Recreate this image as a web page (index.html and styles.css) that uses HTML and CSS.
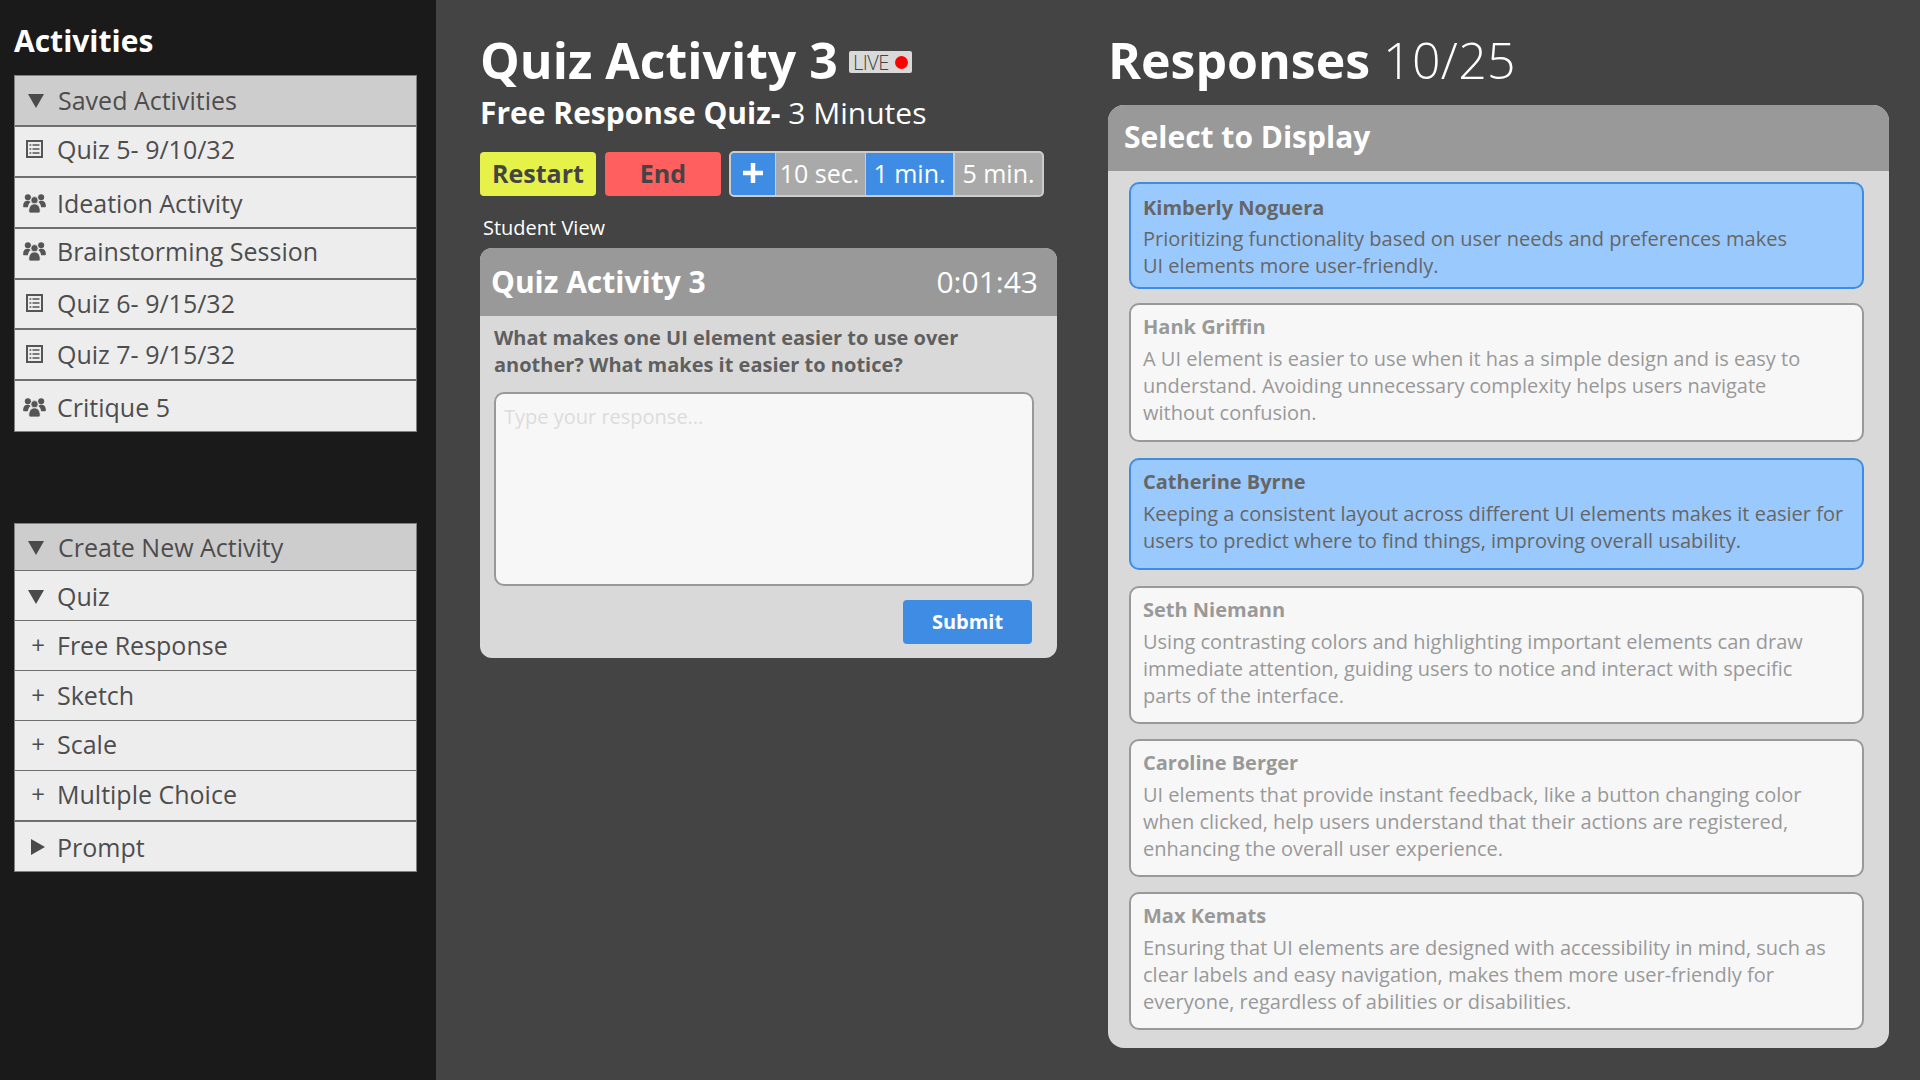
FILE: index.html
```html
<!DOCTYPE html>
<html lang="en">
<head>
  <meta charset="UTF-8">
  <title>Quiz Activity 3</title>
  <link rel="stylesheet" href="styles.css">
</head>
<body>

  <svg class="defs" width="0" height="0">
    <symbol id="ic-quiz" viewBox="0 0 17 18">
      <rect x="1" y="1" width="15" height="16" fill="none" stroke="#555" stroke-width="2"/>
      <path d="M3.500 5h1.800M6.500 5h7M3.500 9h1.800M6.500 9h7M3.500 13h1.800M6.500 13h7" stroke="#555" stroke-width="1.500"/>
    </symbol>
    <symbol id="ic-people" viewBox="0 0 24 20">
      <circle cx="5" cy="3.500" r="3.200"/>
      <circle cx="19" cy="3.500" r="3.200"/>
      <path d="M0 12.500c0-3.500 2-5.500 4.500-5.500 1.500 0 2.500.5 3.500 1.500-1.800 1.500-2.700 3.200-3 5.500H1c-.6 0-1-.9-1-1.500z"/>
      <path d="M24 12.500c0-3.500-2-5.500-4.500-5.500-1.500 0-2.500.5-3.500 1.500 1.800 1.500 2.700 3.200 3 5.500h4c.6 0 1-.9 1-1.500z"/>
      <circle cx="12" cy="6.500" r="3.800" stroke="#ededed" stroke-width=".8"/>
      <path d="M6 18c0-4.800 2.500-7.500 6-7.500s6 2.700 6 7.500c0 1.200-.8 2-2 2H8c-1.200 0-2-.8-2-2z" stroke="#ededed" stroke-width=".8"/>
    </symbol>
  </svg>

  <div class="app">

    <aside class="sidebar">
      <h2 class="side-title">Activities</h2>

      <div class="side-list saved-list">
        <div class="side-row side-head"><span class="slot"><span class="tri-down"></span></span><span class="side-label">Saved Activities</span></div>
        <div class="side-row up"><span class="slot"><svg class="ic-q"><use href="#ic-quiz"/></svg></span><span>Quiz 5- 9/10/32</span></div>
        <div class="side-row nudge-down"><span class="slot"><svg class="ic-p"><use href="#ic-people"/></svg></span><span>Ideation Activity</span></div>
        <div class="side-row up"><span class="slot"><svg class="ic-p"><use href="#ic-people"/></svg></span><span>Brainstorming Session</span></div>
        <div class="side-row nudge-up"><span class="slot"><svg class="ic-q"><use href="#ic-quiz"/></svg></span><span>Quiz 6- 9/15/32</span></div>
        <div class="side-row nudge-up"><span class="slot"><svg class="ic-q"><use href="#ic-quiz"/></svg></span><span>Quiz 7- 9/15/32</span></div>
        <div class="side-row nudge-down"><span class="slot"><svg class="ic-p"><use href="#ic-people"/></svg></span><span>Critique 5</span></div>
      </div>

      <div class="side-list create-list">
        <div class="side-row side-head"><span class="slot"><span class="tri-down"></span></span><span class="side-label">Create New Activity</span></div>
        <div class="side-row"><span class="slot"><span class="tri-down"></span></span><span>Quiz</span></div>
        <div class="side-row nudge-up"><span class="slot"><span class="plus">+</span></span><span>Free Response</span></div>
        <div class="side-row nudge-up"><span class="slot"><span class="plus">+</span></span><span>Sketch</span></div>
        <div class="side-row up"><span class="slot"><span class="plus">+</span></span><span>Scale</span></div>
        <div class="side-row up"><span class="slot"><span class="plus">+</span></span><span>Multiple Choice</span></div>
        <div class="side-row sep"><span class="slot"><span class="tri-right"></span></span><span>Prompt</span></div>
      </div>
    </aside>

    <main class="main">

      <section class="activity">
        <div class="title-line">
          <h1>Quiz Activity 3</h1>
          <div class="live">LIVE<span class="live-dot"></span></div>
        </div>
        <p class="subtitle"><strong>Free Response Quiz-</strong> 3 Minutes</p>

        <div class="controls">
          <button class="btn btn-restart">Restart</button>
          <button class="btn btn-end">End</button>
          <div class="timer">
            <span class="seg seg-plus">
              <svg width="20" height="20" viewBox="0 0 20 20"><path d="M10 0v20M0 10h20" stroke="#fff" stroke-width="4.500"/></svg>
            </span>
            <span class="seg seg-10">10 sec.</span>
            <span class="seg seg-1 on">1 min.</span>
            <span class="seg seg-5">5 min.</span>
          </div>
        </div>

        <div class="view-label">Student View</div>

        <div class="student-card">
          <div class="student-head">
            <span class="student-title">Quiz Activity 3</span>
            <span class="student-time">0:01:43</span>
          </div>
          <div class="student-body">
            <p class="question">What makes one UI element easier to use over another? What makes it easier to notice?</p>
            <div class="answer">Type your response...</div>
            <div class="submit-line"><button class="btn-submit">Submit</button></div>
          </div>
        </div>
      </section>

      <section class="responses">
        <h1>Responses <span class="count">10/25</span></h1>

        <div class="resp-panel">
          <div class="resp-head">Select to Display</div>
          <div class="resp-list">
            <div class="resp selected r-short">
              <div class="resp-name">Kimberly Noguera</div>
              <p>Prioritizing functionality based on user needs and preferences makes<br>UI elements more user-friendly.</p>
            </div>
            <div class="resp r-tall">
              <div class="resp-name">Hank Griffin</div>
              <p>A UI element is easier to use when it has a simple design and is easy to<br>understand. Avoiding unnecessary complexity helps users navigate<br>without confusion.</p>
            </div>
            <div class="resp selected r-mid">
              <div class="resp-name">Catherine Byrne</div>
              <p>Keeping a consistent layout across different UI elements makes it easier for<br>users to predict where to find things, improving overall usability.</p>
            </div>
            <div class="resp">
              <div class="resp-name">Seth Niemann</div>
              <p>Using contrasting colors and highlighting important elements can draw<br>immediate attention, guiding users to notice and interact with specific<br>parts of the interface.</p>
            </div>
            <div class="resp">
              <div class="resp-name">Caroline Berger</div>
              <p>UI elements that provide instant feedback, like a button changing color<br>when clicked, help users understand that their actions are registered,<br>enhancing the overall user experience.</p>
            </div>
            <div class="resp">
              <div class="resp-name">Max Kemats</div>
              <p>Ensuring that UI elements are designed with accessibility in mind, such as<br>clear labels and easy navigation, makes them more user-friendly for<br>everyone, regardless of abilities or disabilities.</p>
            </div>
          </div>
        </div>
      </section>

    </main>
  </div>

</body>
</html>
```

FILE: styles.css
```css
* {
  box-sizing: border-box;
}

html, body {
  margin: 0;
  height: 100%;
}

body {
  background-color: #444;
  color: #fff;
  font-family: "Open Sans", sans-serif;
  overflow: hidden;
}

.defs {
  position: absolute;
}

.app {
  display: flex;
  height: 1080px;
}

/* sidebar */
.sidebar {
  width: 436px;
  flex: none;
  background: #1a1a1a;
  padding: 22px 0 0 14px;
}

.side-title {
  margin: 0 0 15px;
  font-size: 30px;
  line-height: 38px;
  font-weight: 700;
}

.side-list {
  width: 403px;
  border: 1px solid #808080;
  background: #ededed;
  color: #4d4d4d;
}

.create-list {
  margin-top: 91px;
}

.side-row {
  display: flex;
  align-items: center;
  height: 50.9px;
  border-bottom: 2px solid #6f6f6f;
  font-size: 25px;
}

.saved-list .side-row:last-child {
  border-bottom: none;
  height: 50px;
}

.create-list .side-row {
  height: 50px;
  border-bottom-width: 1px;
}

.create-list .side-head {
  height: 47px;
}

.create-list .side-row.sep {
  border-top: 1px solid #6f6f6f;
  border-bottom: none;
  height: 50px;
}

.side-row.up {
  padding-bottom: 4px;
}

.side-row.nudge-up {
  padding-bottom: 2px;
}

.side-row.nudge-down {
  padding-top: 2px;
}

.side-head {
  background: #cdcdcd;
}

.side-label {
  margin-left: 1px;
}

.slot {
  display: flex;
  align-items: center;
  justify-content: center;
  flex: none;
  width: 42px;
}

.tri-down {
  margin-top: 2px;
  border-left: 8px solid transparent;
  border-right: 8px solid transparent;
  border-top: 14px solid #4a4a4a;
}

.tri-right {
  margin-left: 4px;
  border-top: 8px solid transparent;
  border-bottom: 8px solid transparent;
  border-left: 14px solid #4a4a4a;
}

.plus {
  margin-left: 4px;
  font-size: 24px;
  line-height: 30px;
}

.ic-q {
  width: 17px;
  height: 18px;
  margin-right: 3px;
}

.ic-p {
  width: 23px;
  height: 19px;
  margin-right: 3px;
  fill: #555;
}

/* middle column */
.main {
  flex: 1;
  display: flex;
}

.activity {
  width: 670px;
  flex: none;
  padding: 28px 0 0 44px;
}

h1 {
  margin: 0;
  font-size: 50px;
  line-height: 65px;
  font-weight: 700;
}

.title-line {
  display: flex;
  align-items: flex-start;
}

.live {
  display: flex;
  align-items: center;
  height: 22px;
  margin: 23px 0 0 11px;
  padding: 0 4px;
  background: #d9d9d9;
  border-radius: 2px;
  color: #444;
  font-size: 20px;
  font-weight: 300;
  letter-spacing: -0.5px;
}

.live-dot {
  width: 13px;
  height: 13px;
  margin-left: 6px;
  border-radius: 50%;
  background: #f00;
}

.subtitle {
  margin: 0;
  font-size: 30px;
  line-height: 40px;
  font-weight: 400;
}

.controls {
  display: flex;
  align-items: center;
  margin-top: 18px;
}

.btn {
  height: 44px;
  border: none;
  border-radius: 4px;
  color: #444;
  font-family: inherit;
  font-size: 25px;
  font-weight: 700;
  padding: 0 0 2px;
}

.btn-restart {
  width: 116px;
  background: #e6f24a;
}

.btn-end {
  width: 116px;
  margin-left: 9px;
  background: #ff5f5f;
}

.timer {
  display: flex;
  width: 315px;
  height: 46px;
  margin-left: 8px;
  border: 2px solid #ccc;
  border-radius: 5px;
  overflow: hidden;
  background: #ccc;
}

.seg {
  display: flex;
  align-items: center;
  justify-content: center;
  padding-bottom: 2px;
  background: #a9a9a9;
  font-size: 25px;
  font-weight: 400;
}

.seg-plus {
  width: 44px;
  background: #3e8ce4;
}

.seg-10 {
  width: 89px;
  margin-left: 1px;
  padding-right: 2px;
}

.seg-1 {
  width: 87px;
  margin-left: 1px;
}

.seg-5 {
  width: 87px;
  margin-left: 2px;
}

.seg.on {
  background: #3e8ce4;
}

.view-label {
  margin: 17px 0 0 3px;
  font-size: 20px;
  line-height: 28px;
}

.student-card {
  width: 577px;
  height: 410px;
  margin-top: 6px;
  border-radius: 12px;
  overflow: hidden;
  background: #d9d9d9;
}

.student-head {
  display: flex;
  justify-content: space-between;
  align-items: center;
  height: 68px;
  padding: 0 19px 2px 11px;
  background: #999;
}

.student-title {
  font-size: 30px;
  font-weight: 700;
}

.student-time {
  font-size: 30px;
}

.student-body {
  padding: 8px 19px 0 14px;
}

.question {
  margin: 0;
  color: #5f5f5f;
  font-size: 20px;
  line-height: 27px;
  font-weight: 700;
}

.answer {
  width: 540px;
  height: 194px;
  margin-top: 14px;
  padding: 9px 8px;
  border: 2px solid #999;
  border-radius: 10px;
  background: #f7f7f7;
  color: #dcdcdc;
  font-size: 20px;
  line-height: 27px;
}

.submit-line {
  display: flex;
  justify-content: flex-end;
  margin-top: 14px;
  padding-right: 6px;
}

.btn-submit {
  width: 129px;
  height: 44px;
  border: none;
  border-radius: 4px;
  background: #3e8ce4;
  color: #fff;
  font-family: inherit;
  font-size: 20px;
  font-weight: 700;
  padding: 0 0 2px;
}

/* right column */
.responses {
  flex: 1;
  padding: 28px 31px 0 2px;
}

.count {
  font-weight: 300;
  letter-spacing: .3px;
}

.resp-panel {
  height: 943px;
  margin-top: 12px;
  border-radius: 16px;
  overflow: hidden;
  background: #d9d9d9;
}

.resp-head {
  height: 66px;
  padding: 13px 16px;
  background: #999;
  font-size: 30px;
  line-height: 38px;
  font-weight: 700;
}

.resp-list {
  padding: 11px 25px 0 21px;
}

.resp {
  height: 138px;
  margin-bottom: 15px;
  padding: 8px 12px;
  border: 2px solid #999;
  border-radius: 10px;
  background: #f7f7f7;
  color: #999;
}

.resp.selected {
  background: #9ac9fd;
  border-color: #3e8ce4;
  color: #666;
}

.resp.r-short {
  height: 107px;
  margin-bottom: 14px;
  padding-top: 10px;
}

.resp.r-short p {
  margin-top: 4px;
}

.resp.r-tall {
  height: 139px;
}

.resp.r-mid {
  height: 112px;
  margin-top: 16px;
  margin-bottom: 16px;
}

.resp-name {
  font-size: 20px;
  line-height: 27px;
  font-weight: 700;
}

.resp p {
  margin: 5px 0 0;
  font-size: 20px;
  line-height: 27px;
  white-space: nowrap;
}
```
